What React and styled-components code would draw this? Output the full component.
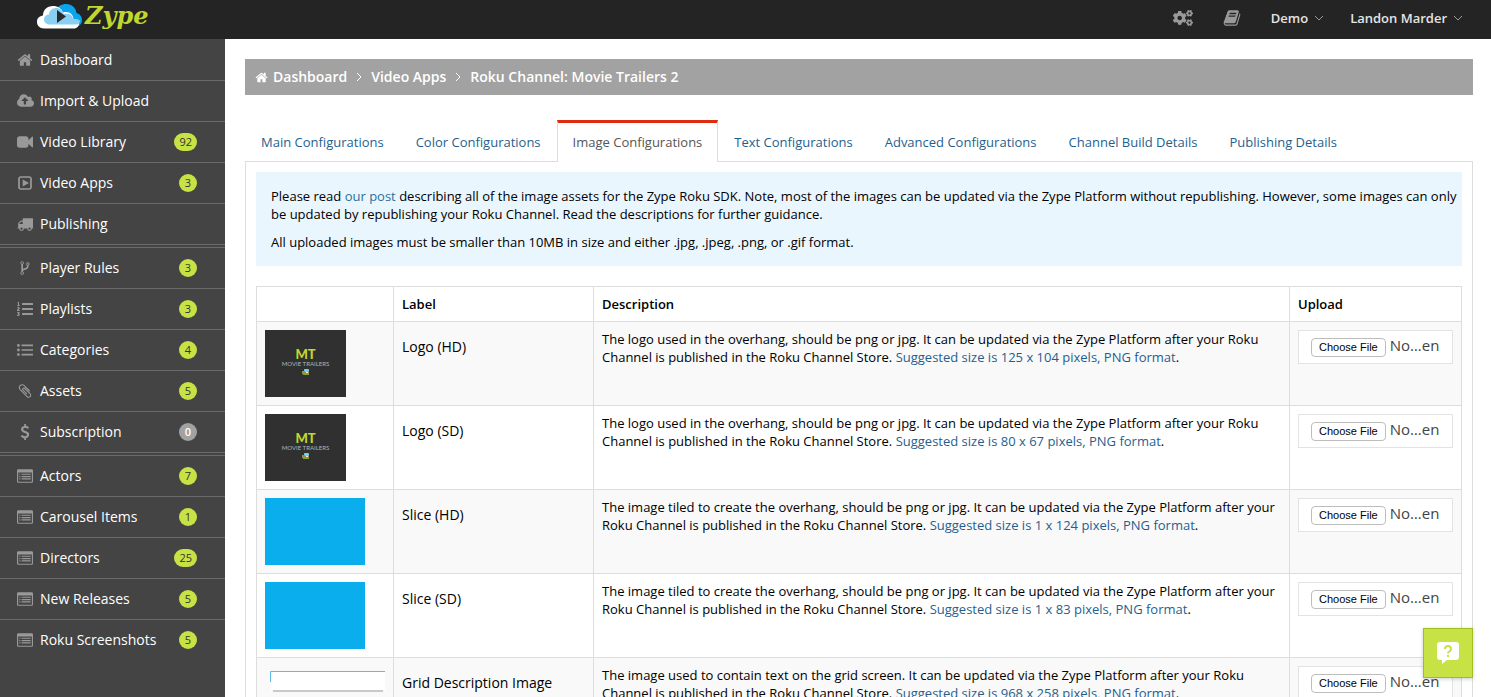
import React from "react";
import styled, { createGlobalStyle } from "styled-components";
import { FaCogs, FaListOl } from "react-icons/fa";

const color = {
  header: "#242424",
  sidebar: "#444444",
  rule: "#6a6a6a",
  muted: "#999999",
  lime: "#c6e244",
  link: "#1f5f8f",
  border: "#dddddd",
  crumb: "#a2a2a2",
};

const GlobalStyle = createGlobalStyle`
  *, *::before, *::after { box-sizing: border-box; }
  body {
    margin: 0;
    background: #ffffff;
    color: #000000;
    font-family: "Open Sans", "Liberation Sans", sans-serif;
    font-size: 13px;
    line-height: 18px;
  }
  a { text-decoration: none; }
`;

const Header = styled.header`
  display: flex;
  align-items: flex-start;
  justify-content: space-between;
  height: 39px;
  padding: 0 28px 0 37px;
  background: ${color.header};
`;

const Brand = styled.a`
  display: flex;
  align-items: center;
  gap: 3px;
  height: 32px;
`;

const BrandName = styled.span`
  color: #c1d72e;
  font-family: "DejaVu Serif", serif;
  font-size: 24px;
  font-style: italic;
  font-weight: 700;
  line-height: 32px;
`;

const TopNav = styled.nav`
  display: flex;
  align-items: center;
  gap: 26px;
  height: 36px;
`;

const IconLink = styled.a`
  display: flex;
  margin-right: 4px;
  color: ${color.muted};
`;

const TopMenu = styled.button`
  display: flex;
  align-items: center;
  gap: 6px;
  padding: 0;
  border: 0;
  background: none;
  color: #e4e4e4;
  font: inherit;
  font-weight: 600;
  cursor: pointer;
`;

const Body = styled.div`
  display: flex;
  min-height: calc(100vh - 39px);
`;

const Sidebar = styled.nav`
  flex: 0 0 225px;
  padding-top: 1px;
  background: ${color.sidebar};
`;

const NavGroup = styled.ul`
  margin: 0;
  padding: 0;
  list-style: none;

  & + & {
    margin-top: 2px;
    border-top: 1px solid ${color.rule};
  }
`;

const NavItem = styled.li`
  border-bottom: 1px solid ${color.rule};

  ${NavGroup}:last-child > &:last-child { border-bottom: 0; }
`;

const NavLink = styled.a`
  display: flex;
  align-items: center;
  height: 40px;
  padding: 0 28px 0 16px;
  color: #ffffff;
  font-size: 14px;
`;

const NavIcon = styled.span`
  display: flex;
  justify-content: center;
  width: 18px;
  margin-right: 6px;
  color: ${color.muted};
`;

const NavText = styled.span`
  flex: 1;
`;

const Badge = styled.span`
  min-width: 18px;
  padding: 0 5px;
  border-radius: 9px;
  background: ${(p) => (p.$empty ? color.crumb : color.lime)};
  color: ${(p) => (p.$empty ? "#ffffff" : "#333333")};
  font-size: 11px;
  font-weight: ${(p) => (p.$empty ? 600 : 400)};
  line-height: 18px;
  text-align: center;
`;

const Main = styled.main`
  flex: 1;
  min-width: 0;
  padding: 20px 18px 20px 20px;
`;

const Breadcrumb = styled.nav`
  display: flex;
  align-items: center;
  gap: 8px;
  height: 36px;
  padding: 0 10px;
  background: ${color.crumb};
  color: #ffffff;
  font-size: 14px;
  font-weight: 600;
`;

const Crumb = styled.a`
  display: flex;
  align-items: center;
  gap: 5px;
  color: inherit;
`;

const Tabs = styled.div`
  display: flex;
  margin-top: 25px;
`;

const Tab = styled.button`
  height: 42px;
  margin-bottom: -1px;
  padding: 0 15px 2px;
  border: 1px solid ${(p) => (p.$active ? color.border : "transparent")};
  border-top: 3px solid ${(p) => (p.$active ? "#dd2c0f" : "transparent")};
  border-bottom: 0;
  background: ${(p) => (p.$active ? "#ffffff" : "transparent")};
  color: ${(p) => (p.$active ? "#555555" : color.link)};
  font: inherit;
  white-space: nowrap;
  cursor: pointer;
  z-index: 1;
`;

const Panel = styled.section`
  padding: 10px;
  border: 1px solid ${color.border};
`;

const Callout = styled.div`
  margin-bottom: 20px;
  padding: 15px 2px 15px 15px;
  background: #eaf6fe;
`;

const Paragraph = styled.p`
  margin: 0;

  & + & { margin-top: 10px; }
`;

const TextLink = styled.a`
  color: #2e6f99;
`;

const AssetTable = styled.table`
  width: 100%;
  border-collapse: collapse;
  table-layout: fixed;
`;

const HeadCell = styled.th`
  width: ${(p) => p.$width || "auto"};
  height: 35px;
  padding: 8px;
  border: 1px solid ${color.border};
  font-weight: 600;
  text-align: left;
`;

const AssetRow = styled.tr`
  height: 84px;

  &:nth-child(odd) { background: #f9f9f9; }
`;

const Cell = styled.td`
  padding: 8px;
  border: 1px solid ${color.border};
  vertical-align: top;
`;

const AssetLabel = styled.label`
  display: block;
  padding-top: 8px;
  font-size: 14px;
`;

const SizeHint = styled.span`
  color: ${color.link};
`;

const Thumb = styled.svg`
  display: block;
`;

const LogoThumb = styled.div`
  display: flex;
  flex-direction: column;
  align-items: center;
  width: 81px;
  height: 67px;
  padding-top: 18px;
  background: #303030;
`;

const LogoInitials = styled.strong`
  color: #c1d72e;
  font-family: Lato, sans-serif;
  font-size: 13px;
  font-weight: 900;
  line-height: 13px;
`;

const LogoCaption = styled.span`
  margin-bottom: 1px;
  color: #b4b4b4;
  font-family: Lato, sans-serif;
  font-size: 6px;
  line-height: 6px;
`;

const FileInput = styled.input`
  display: block;
  width: 100%;
  height: 34px;
  padding: 4px 8px 4px 12px;
  border: 1px solid #e3e3e3;
  background: #ffffff;
  color: #444444;
  font-family: inherit;
  font-size: 15px;

  &::file-selector-button {
    height: 19px;
    margin: 0 4px 0 0;
    padding: 0 7px;
    border: 1px solid #bdbdbd;
    border-radius: 4px;
    background: #ffffff;
    color: #000000;
    font-family: "Liberation Sans", Arial, sans-serif;
    font-size: 11px;
  }
`;

const HelpButton = styled.button`
  position: fixed;
  right: 18px;
  bottom: 19px;
  display: flex;
  align-items: center;
  justify-content: center;
  width: 50px;
  height: 50px;
  padding: 0;
  border: 1px solid #a3bc22;
  background: ${color.lime};
  box-shadow: 0 1px 4px rgba(0, 0, 0, 0.2);
  cursor: pointer;
`;

const glyphs = {
  home: {
    d: "M1472 992v480q0 26-19 45t-45 19h-384v-384h-256v384h-384q-26 0-45-19t-19-45v-480q0-1 .5-3t.5-3l575-474 575 474q1 2 1 6zm223-69l-62 74q-8 9-21 11h-3q-13 0-21-7l-692-577-692 577q-12 8-24 7-13-2-21-11l-62-74q-8-10-7-23.5t11-21.5l719-599q32-26 76-26t76 26l244 204v-195q0-14 9-23t23-9h192q14 0 23 9t9 23v408l219 182q10 8 11 21.5t-7 23.5z",
  },
  upload: {
    box: "-64 0 1920 1792",
    width: 17,
    d: "M1216 864q0-14-9-23l-352-352q-9-9-23-9t-23 9l-351 351q-10 12-10 24 0 14 9 23t23 9h224v352q0 13 9.5 22.5t22.5 9.5h192q13 0 22.5-9.5t9.5-22.5v-352h224q13 0 22.5-9.5t9.5-22.5zm640 288q0 159-112.5 271.5t-271.5 112.5h-1088q-185 0-316.5-131.5t-131.5-316.5q0-130 70-240t188-165q-2-30-2-43 0-212 150-362t362-150q156 0 285.5 87t188.5 231q71-62 166-62 106 0 181 75t75 181q0 76-41 138 130 31 213.5 135.5t83.5 238.5z",
  },
  camera: {
    d: "M1792 352v1088q0 42-39 59-13 5-25 5-27 0-45-19l-403-403v166q0 119-84.5 203.5t-203.5 84.5h-704q-119 0-203.5-84.5t-84.5-203.5v-704q0-119 84.5-203.5t203.5-84.5h704q119 0 203.5 84.5t84.5 203.5v165l403-402q18-19 45-19 12 0 25 5 39 17 39 59z",
  },
  play: {
    d: "M416 128h960q119 0 203.500 84.500t84.500 203.500v960q0 119-84.500 203.500t-203.500 84.500h-960q-119 0-203.500-84.500t-84.500-203.500v-960q0-119 84.500-203.500t203.500-84.500zm0 192q-96 0-96 96v960q0 96 96 96h960q96 0 96-96v-960q0-96-96-96zM640 512l704 384-704 384z",
  },
  truck: {
    d: "M640 1408q0-52-38-90t-90-38-90 38-38 90 38 90 90 38 90-38 38-90zm-384-512h384v-256h-158q-13 0-22 9l-195 195q-9 9-9 22v30zm1280 512q0-52-38-90t-90-38-90 38-38 90 38 90 90 38 90-38 38-90zm256-1088v1024q0 15-4 26.500t-13.500 18.500-16.500 11.500-23.500 6-22.500 2-25.500 0-22.500-.5q0 106-75 181t-181 75-181-75-75-181h-384q0 106-75 181t-181 75-181-75-75-181h-64q-3 0-22.500.5t-25.500 0-22.500-2-23.500-6-16.500-11.500-13.500-18.500-4-26.500q0-26 19-45t45-19v-320q0-8-.5-35t0-38 2.500-34.500 6.500-37 14-30.500 22.500-30l198-198q19-19 50.500-32t58.500-13h160v-192q0-26 19-45t45-19h1024q26 0 45 19t19 45z",
  },
  fork: {
    d: "M672 1472q0-40-28-68t-68-28-68 28-28 68 28 68 68 28 68-28 28-68zm0-1152q0-40-28-68t-68-28-68 28-28 68 28 68 68 28 68-28 28-68zm640 128q0-40-28-68t-68-28-68 28-28 68 28 68 68 28 68-28 28-68zm96 0q0 52-26 96.500t-70 69.500q-2 287-226 414-67 38-203 81-128 40-169.500 71t-41.500 100v26q44 25 70 69.500t26 96.500q0 80-56 136t-136 56-136-56-56-136q0-52 26-96.500t70-69.500v-820q-44-25-70-69.500t-26-96.500q0-80 56-136t136-56 136 56 56 136q0 52-26 96.500t-70 69.500v497q54-26 154-57 55-17 87.500-29.500t70.500-31 59-39.500 40.500-51 28-69.500 8.500-91.500q-44-25-70-69.500t-26-96.500q0-80 56-136t136-56 136 56 56 136z",
  },
  list: {
    d: "M0 384a160 160 0 1 0 320 0a160 160 0 1 0-320 0zM0 896a160 160 0 1 0 320 0a160 160 0 1 0-320 0zM0 1408a160 160 0 1 0 320 0a160 160 0 1 0-320 0zM512 288h1280v192h-1280zM512 800h1280v192h-1280zM512 1312h1280v192h-1280z",
  },
  clip: {
    d: "M1596 1385q0 117-79 196t-196 79q-135 0-235-100l-777-776q-113-115-113-271 0-159 110-270t269-111q158 0 273 113l605 606q10 10 10 22 0 16-30.500 46.500t-46.500 30.500q-13 0-23-10l-606-607q-79-77-181-77-106 0-179 75t-73 181q0 105 76 181l776 777q63 63 145 63 64 0 106-42t42-106q0-82-63-145l-581-581q-26-24-60-24-29 0-48 19t-19 48q0 32 25 59l410 410q10 10 10 22 0 16-31 47t-47 31q-12 0-22-10l-410-410q-63-61-63-149 0-82 57-139t139-57q88 0 149 63l581 581q100 98 100 235z",
  },
  dollar: {
    d: "M1362 1185q0 153-99.500 263.500t-258.500 136.500v175q0 14-9 23t-23 9h-135q-13 0-22.500-9.500t-9.500-22.500v-175q-66-9-127.500-31t-101.500-44.500-74-48-46.500-37.500-17.500-18q-17-21-2-41l103-135q7-10 23-12 15-2 24 9l2 2q113 99 243 125 37 8 74 8 81 0 142.500-43t61.500-122q0-28-15-53t-33.500-42-58.500-37.500-66-32-80-32.500q-39-16-61.500-25t-61.500-26.500-62.500-31-56.500-35.500-53.500-42.500-43.500-49-35.500-58-21-66.500-8.500-78q0-138 98-242t255-134v-180q0-13 9.500-22.500t22.500-9.500h135q14 0 23 9t9 23v176q57 6 110.500 23t87 33.500 63.500 37.500 39 29 15 14q17 18 5 38l-81 146q-8 15-23 16-14 3-27-7-3-3-14.500-12t-39-26.500-58.500-32-74.500-26-85.500-11.500q-95 0-155 43t-60 111q0 26 8.500 48t29.500 41.500 39.500 33 56 31 60.500 27 70 27.500q53 20 81 31.500t76 35 75.500 42.500 62 50 53 63.500 31.500 76.500 13 94z",
  },
  panel: {
    d: "M160 128h1472q66 0 113 47t47 113v1216q0 66-47 113t-113 47h-1472q-66 0-113-47t-47-113v-1216q0-66 47-113t113-47zM128 512v992q0 32 32 32h1472q32 0 32-32v-992zM256 640h128v128h-128zM512 640h1024v128h-1024zM256 896h128v128h-128zM512 896h1024v128h-1024zM256 1152h128v128h-128zM512 1152h1024v128h-1024z",
  },
  book: {
    d: "M1703 478q40 57 18 129l-275 906q-19 64-76.500 107.500t-122.500 43.500h-923q-77 0-148.500-53.500t-99.500-131.500q-24-67-2-127 0-4 3-27t4-37q1-8-3-21.500t-3-19.500q2-11 8-21t16.500-23.500 16.500-23.500q23-38 45-91.500t30-91.500q3-10 .5-30t-.5-28q3-11 17-28t17-23q21-36 42-92t25-90q1-9-2.500-32t.5-28q4-13 22-30.500t22-22.500q19-26 42.500-84.500t27.500-96.500q1-8-3-25.500t-2-26.500q2-8 9-18t18-23 17-21q8-12 16.500-30.500t15-35 16-36 19.500-32 26.500-23.500 36-11.500 47.500 5.500l-1 3q38-9 51-9h761q74 0 114 56t18 130l-274 906q-36 119-71.500 153.500t-128.500 34.500h-869q-27 0-38 15-11 16-1 43 24 70 144 70h923q29 0 56-15.500t35-41.500l300-987q7-22 5-57 38 15 59 43zm-1064 2q-4 13 2 22.500t20 9.500h608q13 0 25.500-9.500t16.500-22.500l21-64q4-13-2-22.500t-20-9.500h-608q-13 0-25.500 9.500t-16.500 22.500zm-83 256q-4 13 2 22.500t20 9.500h608q13 0 25.500-9.500t16.500-22.500l21-64q4-13-2-22.500t-20-9.500h-608q-13 0-25.500 9.500t-16.500 22.500z",
  },
};

function Icon({ name, size = 16 }) {
  const { d, box = "0 0 1792 1792", width = size } = glyphs[name];
  return (
    <svg width={width} height={size} viewBox={box} fill="currentColor" aria-hidden="true">
      <path d={d} fillRule="evenodd" />
    </svg>
  );
}

function Caret() {
  return (
    <svg width="10" height="6" viewBox="0 0 10 6" fill="none" stroke="#999999" aria-hidden="true">
      <path d="M1 1l4 4 4-4" />
    </svg>
  );
}

function CrumbArrow() {
  return (
    <svg width="8" height="8" viewBox="0 0 8 8" fill="none" stroke="#ffffff" aria-hidden="true">
      <path d="M2 0l4 4-4 4" />
    </svg>
  );
}

function CloudLogo() {
  return (
    <svg width="45" height="26" viewBox="0 0 45 26" aria-hidden="true">
      <path d="M19 7C21 3 25 1 29 1c6 0 10 4 10.500 9 3.500 1 5.500 4 5.500 7 0 4-3 7-7 7H26z" fill="#0aa5ea" />
      <path d="M7 25.500c-4.500 0-7-3-7-6.500 0-4 2.500-6 6-6.500C6 7 10 3 16 3c5 0 8.500 2.500 10 6.500 6-1.500 10 1.500 10.500 6.500 3 0 5.500 2 5.500 4.500s-2 5-5 5z" fill="#ffffff" />
      <path d="M13 21.500c-4 0-6-2.500-6-5s2-5 5-5C12 8 15 5 19 5s6 2 7.500 6c6-1 9 1 9.500 5 3 0 6 0 7 2 0 2-2 3.500-4 3.500z" fill="#8ad0f3" />
      <path d="M20 7l9 6.500-9 6.500z" fill="#2b2b2b" />
    </svg>
  );
}

function MovieLogo() {
  return (
    <LogoThumb>
      <LogoInitials>MT</LogoInitials>
      <LogoCaption>MOVIE TRAILERS</LogoCaption>
      <svg width="8" height="8" viewBox="0 0 8 8" aria-hidden="true">
        <rect x="2" y="1" width="5" height="3" rx="1" fill="#7ccbf2" />
        <rect x="0" y="3" width="3" height="3" fill="#8d9a2c" />
        <rect x="1" y="4" width="6" height="3" fill="#8d9a2c" />
        <rect x="4" y="4" width="2" height="1" fill="#e8e8e8" />
      </svg>
    </LogoThumb>
  );
}

function Slice() {
  return (
    <Thumb width="100" height="67" aria-hidden="true">
      <rect width="100" height="67" fill="#0aaeed" />
    </Thumb>
  );
}

function GridPreview() {
  return (
    <Thumb width="120" height="67" viewBox="0 0 120 67" aria-hidden="true">
      <rect x="6" y="6" width="114" height="18" fill="#ffffff" />
      <path d="M5.500 16V5.500H120" fill="none" stroke="#5bbde6" />
      <rect x="8" y="24" width="110" height="2" fill="#c9c9c9" />
    </Thumb>
  );
}

const navGroups = [
  [
    { icon: "home", text: "Dashboard" },
    { icon: "upload", text: "Import & Upload" },
    { icon: "camera", text: "Video Library", count: 92 },
    { icon: "play", text: "Video Apps", count: 3 },
    { icon: "truck", text: "Publishing" },
  ],
  [
    { icon: "fork", text: "Player Rules", count: 3 },
    { icon: "ordered", text: "Playlists", count: 3 },
    { icon: "list", text: "Categories", count: 4 },
    { icon: "clip", text: "Assets", count: 5 },
    { icon: "dollar", text: "Subscription", count: 0 },
  ],
  [
    { icon: "panel", text: "Actors", count: 7 },
    { icon: "panel", text: "Carousel Items", count: 1 },
    { icon: "panel", text: "Directors", count: 25 },
    { icon: "panel", text: "New Releases", count: 5 },
    { icon: "panel", text: "Roku Screenshots", count: 5 },
  ],
];

const tabs = [
  "Main Configurations",
  "Color Configurations",
  "Image Configurations",
  "Text Configurations",
  "Advanced Configurations",
  "Channel Build Details",
  "Publishing Details",
];

const logoText =
  "The logo used in the overhang, should be png or jpg. It can be updated via the Zype Platform after your Roku Channel is published in the Roku Channel Store.";
const sliceText =
  "The image tiled to create the overhang, should be png or jpg. It can be updated via the Zype Platform after your Roku Channel is published in the Roku Channel Store.";
const gridText =
  "The image used to contain text on the grid screen. It can be updated via the Zype Platform after your Roku Channel is published in the Roku Channel Store.";

const assets = [
  { id: "logo-hd", label: "Logo (HD)", preview: MovieLogo, text: logoText, size: "125 x 104" },
  { id: "logo-sd", label: "Logo (SD)", preview: MovieLogo, text: logoText, size: "80 x 67" },
  { id: "slice-hd", label: "Slice (HD)", preview: Slice, text: sliceText, size: "1 x 124" },
  { id: "slice-sd", label: "Slice (SD)", preview: Slice, text: sliceText, size: "1 x 83" },
  { id: "grid", label: "Grid Description Image", preview: GridPreview, text: gridText, size: "968 x 258" },
];

export default function App() {
  return (
    <>
      <GlobalStyle />
      <Header>
        <Brand href="#">
          <CloudLogo />
          <BrandName>Zype</BrandName>
        </Brand>
        <TopNav aria-label="Account">
          <IconLink href="#" aria-label="Settings"><FaCogs size={20} /></IconLink>
          <IconLink href="#" aria-label="Documentation"><Icon name="book" size={18} /></IconLink>
          <TopMenu type="button">Demo <Caret /></TopMenu>
          <TopMenu type="button">Landon Marder <Caret /></TopMenu>
        </TopNav>
      </Header>
      <Body>
        <Sidebar aria-label="Main">
          {navGroups.map((group, i) => (
            <NavGroup key={i}>
              {group.map(({ icon, text, count }) => (
                <NavItem key={text}>
                  <NavLink href="#">
                    <NavIcon>{icon === "ordered" ? <FaListOl size={16} /> : <Icon name={icon} />}</NavIcon>
                    <NavText>{text}</NavText>
                    {count !== undefined && <Badge $empty={count === 0}>{count}</Badge>}
                  </NavLink>
                </NavItem>
              ))}
            </NavGroup>
          ))}
        </Sidebar>
        <Main>
          <Breadcrumb aria-label="Breadcrumb">
            <Crumb href="#"><Icon name="home" size={13} />Dashboard</Crumb>
            <CrumbArrow />
            <Crumb href="#">Video Apps</Crumb>
            <CrumbArrow />
            <Crumb href="#">Roku Channel: Movie Trailers 2</Crumb>
          </Breadcrumb>
          <Tabs role="tablist">
            {tabs.map((name) => {
              const active = name === "Image Configurations";
              return (
                <Tab key={name} type="button" role="tab" aria-selected={active} $active={active}>
                  {name}
                </Tab>
              );
            })}
          </Tabs>
          <Panel>
            <Callout>
              <Paragraph>
                Please read <TextLink href="#">our post</TextLink> describing all of the image assets for the Zype Roku SDK.
                Note, most of the images can be updated via the Zype Platform without republishing. However, some images can
                only be updated by republishing your Roku Channel. Read the descriptions for further guidance.
              </Paragraph>
              <Paragraph>All uploaded images must be smaller than 10MB in size and either .jpg, .jpeg, .png, or .gif format.</Paragraph>
            </Callout>
            <AssetTable>
              <thead>
                <tr>
                  <HeadCell $width="137px" aria-label="Preview" />
                  <HeadCell $width="200px">Label</HeadCell>
                  <HeadCell>Description</HeadCell>
                  <HeadCell $width="172px">Upload</HeadCell>
                </tr>
              </thead>
              <tbody>
                {assets.map(({ id, label, preview: Preview, text, size }) => (
                  <AssetRow key={id}>
                    <Cell><Preview /></Cell>
                    <Cell><AssetLabel htmlFor={id}>{label}</AssetLabel></Cell>
                    <Cell>{text} <SizeHint>Suggested size is {size} pixels, PNG format</SizeHint>.</Cell>
                    <Cell><FileInput id={id} type="file" /></Cell>
                  </AssetRow>
                ))}
              </tbody>
            </AssetTable>
          </Panel>
        </Main>
      </Body>
      <HelpButton type="button" aria-label="Help">
        <svg width="22" height="22" viewBox="0 0 22 22" aria-hidden="true">
          <path d="M3 0h16q3 0 3 3v12q0 3-3 3H10l-5 4v-4H3q-3 0-3-3V3q0-3 3-3z" fill="#ffffff" />
          <path d="M8 7q0-3 3-3t3 3q0 1.500-1.500 2.300T11 11.500" fill="none" stroke="#c6e244" strokeWidth="2" />
          <rect x="10" y="13" width="2" height="2" fill="#c6e244" />
        </svg>
      </HelpButton>
    </>
  );
}
